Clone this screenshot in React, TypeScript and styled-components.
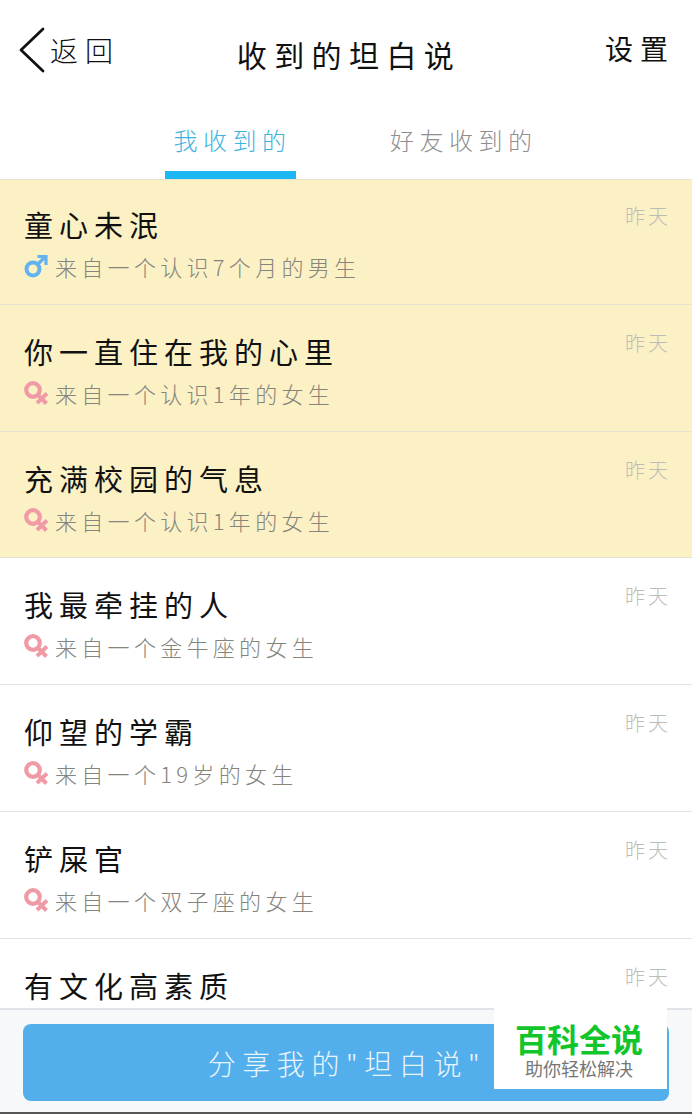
import React from "react";
import styled, { createGlobalStyle } from "styled-components";

const GlobalStyle = createGlobalStyle`
  html, body {
    margin: 0;
    padding: 0;
    background: #fff;
    font-family: "Noto Sans CJK SC", "Noto Sans", sans-serif;
  }
  * {
    box-sizing: border-box;
  }
`;

const Page = styled.div`
  position: relative;
  width: 692px;
  height: 1114px;
  overflow: hidden;
  display: flex;
  flex-direction: column;
  background: #fff;
`;
const Header = styled.div`
  height: 100px;
  flex: none;
  display: flex;
  align-items: center;
  justify-content: space-between;
  padding: 0 24px 0 18px;
`;
const Back = styled.div`
  display: flex;
  align-items: center;
  gap: 4px;
  width: 150px;
  font-size: 28px;
  letter-spacing: 7px;
  font-weight: 300;
  color: #111;
`;
const HeaderTitle = styled.div`
  font-size: 30px;
  letter-spacing: 7.4px;
  font-weight: 400;
  color: #111;
  margin: 8px 0 0 5px;
`;
const Setting = styled.div`
  width: 150px;
  text-align: right;
  font-size: 28px;
  letter-spacing: 7px;
  margin-right: -7px;
  margin-top: -4px;
  font-weight: 400;
  color: #111;
`;
const Tabs = styled.div`
  position: relative;
  z-index: 1;
  height: 80px;
  flex: none;
  display: flex;
  padding-left: 165px;
  background: #fff;
  border-bottom: 1px solid #e9e4c8;
`;
const Tab = styled.div<{ $active?: boolean }>`
  width: ${(p) => (p.$active ? "131px" : "auto")};
  margin-left: ${(p) => (p.$active ? "0" : "94px")};
  height: 79px;
  padding-top: 22px;
  padding-left: ${(p) => (p.$active ? "4px" : "0")};
  text-align: center;
  white-space: nowrap;
  font-size: 24px;
  line-height: 36px;
  letter-spacing: 5.5px;
  font-weight: 300;
  color: ${(p) => (p.$active ? "#3db4e0" : "#8f8f8f")};
  border-bottom: ${(p) => (p.$active ? "8px solid #1cb6f2" : "none")};
`;
const List = styled.div`
  flex: 1;
  min-height: 0;
  margin-top: -2px;
  overflow: hidden;
`;
const Row = styled.div<{ $unread?: boolean }>`
  position: relative;
  height: 126.8px;
  padding: 24px 24px 0 24px;
  background: ${(p) => (p.$unread ? "#fcf1c5" : "#fff")};
  border-bottom: 1px solid ${(p) => (p.$unread ? "#e6e2cf" : "#e2e2e2")};
`;
const RowTitle = styled.div`
  font-size: 29px;
  line-height: 44px;
  letter-spacing: 6px;
  font-weight: 400;
  color: #111;
`;
const RowMeta = styled.div`
  display: flex;
  align-items: center;
  gap: 7px;
  height: 40px;
`;
const MetaText = styled.span`
  font-size: 22px;
  letter-spacing: 4.3px;
  font-weight: 300;
  color: #85847d;
  white-space: nowrap;
`;
const Time = styled.div`
  position: absolute;
  top: 25px;
  right: 24px;
  font-size: 20px;
  line-height: 26px;
  letter-spacing: 3px;
  margin-right: -3px;
  font-weight: 300;
  color: #bdbdb8;
`;
const Footer = styled.div`
  height: 106px;
  flex: none;
  padding: 14px 23px 0;
  background: #f6f8fa;
  border-top: 2px solid #dfe4ea;
  border-bottom: 2px solid #555;
`;
const ShareButton = styled.div`
  height: 77px;
  border-radius: 8px;
  background: #53aeec;
  display: flex;
  align-items: center;
  justify-content: center;
  font-size: 28px;
  letter-spacing: 6.6px;
  font-weight: 300;
  color: #e9f5fd;
  padding-left: 2px;
`;
const Watermark = styled.div`
  position: absolute;
  left: 494px;
  top: 1008px;
  width: 173px;
  height: 81px;
  background: #fff;
  display: flex;
  flex-direction: column;
  align-items: center;
  padding-top: 11px;
`;
const WatermarkTitle = styled.div`
  font-size: 32px;
  line-height: 38px;
  font-weight: 700;
  color: #12c52b;
  margin-left: -3px;
`;
const WatermarkSub = styled.div`
  font-size: 18px;
  line-height: 22px;
  font-weight: 400;
  color: #777;
  margin-left: -3px;
`;

const BackIcon = () => (
  <svg width="28" height="48" viewBox="0 0 28 48">
    <path d="M25 3 L3 24 L25 45" fill="none" stroke="#111" strokeWidth="2.8" strokeLinecap="round" strokeLinejoin="round" />
  </svg>
);

const MaleIcon = () => (
  <svg width="24" height="24" viewBox="0 0 24 24">
    <circle cx="9" cy="15" r="6.5" fill="none" stroke="#62b4f0" strokeWidth="4" />
    <path d="M14 10 L21 3 M13.5 2.5 H22 V11" fill="none" stroke="#62b4f0" strokeWidth="3.2" />
  </svg>
);

const FemaleIcon = () => (
  <svg width="24" height="24" viewBox="0 0 24 24">
    <circle cx="9" cy="9" r="6.8" fill="none" stroke="#f09aa6" strokeWidth="4.2" />
    <path d="M13.5 13.5 L22.5 22.5 M23 12.5 L13 22" fill="none" stroke="#f09aa6" strokeWidth="4" />
  </svg>
);

const rows = [
  { title: "童心未泯", meta: "来自一个认识7个月的男生", male: true, unread: true },
  { title: "你一直住在我的心里", meta: "来自一个认识1年的女生", unread: true },
  { title: "充满校园的气息", meta: "来自一个认识1年的女生", unread: true },
  { title: "我最牵挂的人", meta: "来自一个金牛座的女生" },
  { title: "仰望的学霸", meta: "来自一个19岁的女生" },
  { title: "铲屎官", meta: "来自一个双子座的女生" },
  { title: "有文化高素质", meta: "" },
];

export default function App() {
  return (
    <Page>
      <GlobalStyle />
      <Header>
        <Back>
          <BackIcon />
          <span>返回</span>
        </Back>
        <HeaderTitle>收到的坦白说</HeaderTitle>
        <Setting>设置</Setting>
      </Header>
      <Tabs>
        <Tab $active>我收到的</Tab>
        <Tab>好友收到的</Tab>
      </Tabs>
      <List>
        {rows.map((row) => (
          <Row key={row.title} $unread={row.unread}>
            <RowTitle>{row.title}</RowTitle>
            {row.meta && (
              <RowMeta>
                {row.male ? <MaleIcon /> : <FemaleIcon />}
                <MetaText>{row.meta}</MetaText>
              </RowMeta>
            )}
            <Time>昨天</Time>
          </Row>
        ))}
      </List>
      <Footer>
        <ShareButton>分享我的"坦白说"</ShareButton>
      </Footer>
      <Watermark>
        <WatermarkTitle>百科全说</WatermarkTitle>
        <WatermarkSub>助你轻松解决</WatermarkSub>
      </Watermark>
    </Page>
  );
}
